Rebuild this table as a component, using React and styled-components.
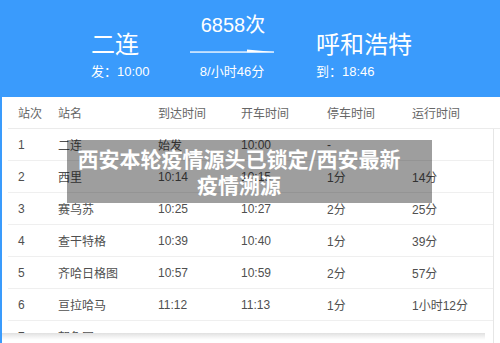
import React from 'react';
import styled, { createGlobalStyle } from 'styled-components';

const GlobalStyle = createGlobalStyle`
  html, body {
    margin: 0;
    padding: 0;
  }
  body {
    font-family: "Liberation Sans", "Noto Sans CJK SC", sans-serif;
    background: #fff;
  }
`;

const stops = [
  { no: '1', name: '二连', arrive: '始发', depart: '10:00', stay: '-', run: '' },
  { no: '2', name: '西里', arrive: '10:14', depart: '10:15', stay: '1分', run: '14分' },
  { no: '3', name: '赛乌苏', arrive: '10:25', depart: '10:27', stay: '2分', run: '25分' },
  { no: '4', name: '查干特格', arrive: '10:39', depart: '10:40', stay: '1分', run: '39分' },
  { no: '5', name: '齐哈日格图', arrive: '10:57', depart: '10:59', stay: '2分', run: '57分' },
  { no: '6', name: '亘拉哈马', arrive: '11:12', depart: '11:13', stay: '1分', run: '1小时12分' },
  { no: '7', name: '朝鲁图', arrive: '', depart: '', stay: '', run: '' },
];

function App() {
  return (
    <>
      <GlobalStyle />
      <Page>
        <Header>
          <Station width="99px">
            <StationName>二连</StationName>
            <Sub>发：10:00</Sub>
          </Station>
          <Train>
            <TrainNo>6858次</TrainNo>
            <Arrow width="84" height="6" viewBox="0 0 84 6">
              <rect x="0" y="2.4" width="84" height="1.3" fill="#fff" />
              <polygon points="57,0.4 84,3 57,3.2" fill="#fff" />
            </Arrow>
            <Sub>8/小时46分</Sub>
          </Train>
          <Station>
            <StationName>呼和浩特</StationName>
            <Sub>到：18:46</Sub>
          </Station>
        </Header>
        <Panel>
          <HeadRow>
            <Cell>站次</Cell>
            <Cell>站名</Cell>
            <Cell>到达时间</Cell>
            <Cell>开车时间</Cell>
            <Cell>停车时间</Cell>
            <Cell>运行时间</Cell>
          </HeadRow>
          <Body>
            {stops.map((s) => (
              <Row key={s.no}>
                <Cell>{s.no}</Cell>
                <Cell>{s.name}</Cell>
                <Cell>{s.arrive}</Cell>
                <Cell>{s.depart}</Cell>
                <Cell>{s.stay}</Cell>
                <Cell>{s.run}</Cell>
              </Row>
            ))}
          </Body>
          <Caption>
            西安本轮疫情源头已锁定/西安最新
            <br />
            疫情溯源
          </Caption>
          <BottomFade />
        </Panel>
      </Page>
    </>
  );
}

export default App;

const Page = styled.div`
  width: 500px;
  height: 343px;
  overflow: hidden;
  background: #3a9bfc;
  display: flex;
  flex-direction: column;
`;

const Header = styled.div`
  height: 97px;
  flex-shrink: 0;
  display: flex;
  align-items: flex-start;
  padding-left: 91px;
  color: #fff;
`;

const Station = styled.div`
  width: ${(p) => p.width || 'auto'};
  padding-top: 31px;
  display: flex;
  flex-direction: column;
  gap: 5px;
`;

const StationName = styled.div`
  font-size: 24px;
  line-height: 28px;
  white-space: nowrap;
`;

const Sub = styled.div`
  font-size: 13px;
  line-height: 16px;
  white-space: nowrap;
`;

const Train = styled.div`
  width: 84px;
  margin-right: 42px;
  padding-top: 13px;
  display: flex;
  flex-direction: column;
  align-items: center;
`;

const TrainNo = styled.div`
  font-size: 20px;
  line-height: 24px;
  margin-left: 2px;
`;

const Arrow = styled.svg`
  display: block;
  margin: 12px 0 9px;
`;

const Panel = styled.div`
  position: relative;
  flex: 1;
  min-height: 0;
  overflow: hidden;
  margin-left: 2px;
  background: #fff;
  padding-left: 6px;
  color: #4f4f4f;
  font-size: 12px;
`;

const columns = '40px 100px 83px 86px 85px 1fr';

const HeadRow = styled.div`
  display: grid;
  grid-template-columns: ${columns};
  height: 31px;
  align-items: center;
  border-bottom: 1px solid #ebebeb;
  color: #666;
`;

const Body = styled.div`
  width: 485px;
  border-right: 1px solid #e6e6e6;
`;

const Row = styled.div`
  display: grid;
  grid-template-columns: ${columns};
  height: 31px;
  align-items: center;
  border-bottom: 1px solid #efefef;
`;

const Cell = styled.div`
  padding-left: 10px;
  white-space: nowrap;
`;

const Caption = styled.div`
  position: absolute;
  left: 65px;
  top: 43px;
  width: 365px;
  height: 63px;
  box-sizing: border-box;
  padding: 5px 21px 0 0;
  background: rgba(0, 0, 0, 0.38);
  color: #fff;
  font-family: "Noto Sans CJK SC", sans-serif;
  font-weight: 700;
  font-size: 21px;
  line-height: 26px;
  text-align: center;
  white-space: nowrap;
`;

const BottomFade = styled.div`
  position: absolute;
  left: -2px;
  bottom: 0;
  width: 485px;
  height: 10px;
  background: linear-gradient(180deg, #e0e0e0 0%, #f3f3f3 40%, #ffffff 70%);
`;
